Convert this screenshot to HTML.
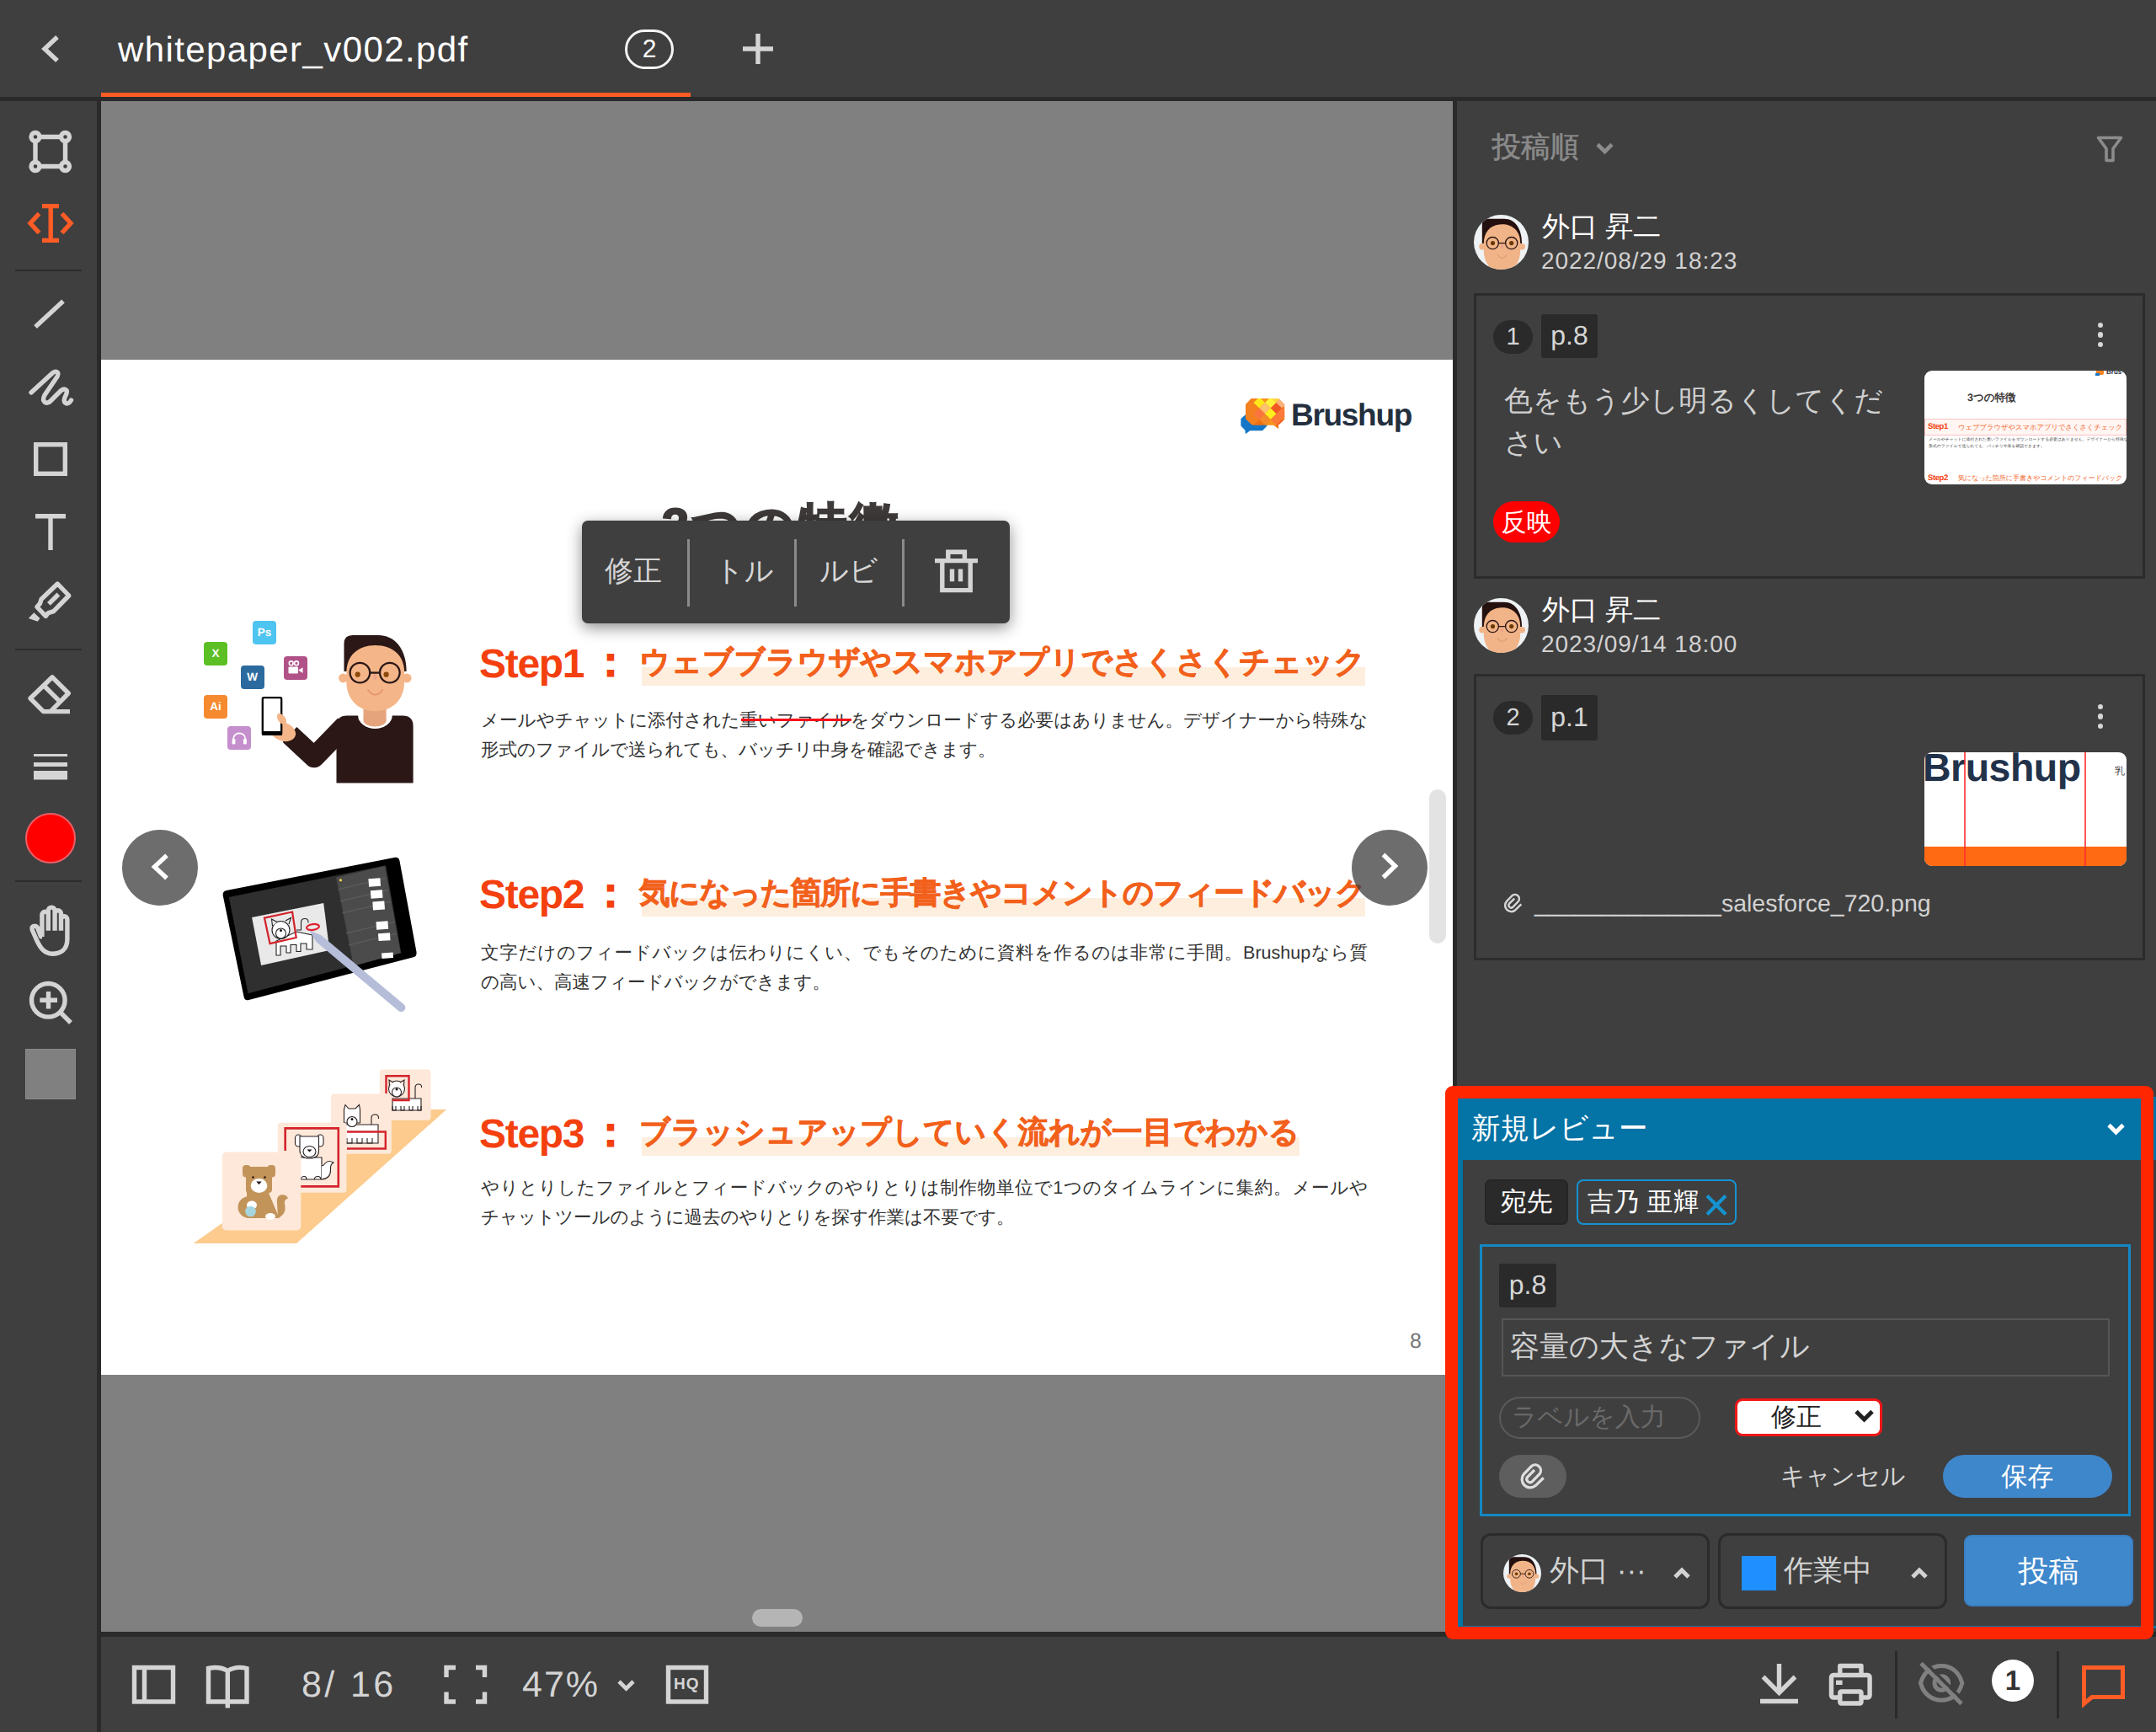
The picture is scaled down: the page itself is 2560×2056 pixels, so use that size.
<!DOCTYPE html>
<html lang="ja">
<head>
<meta charset="utf-8">
<title>whitepaper_v002.pdf</title>
<style>
*{margin:0;padding:0;box-sizing:border-box}
html,body{width:2560px;height:2056px;overflow:hidden;background:#3f3f3f;font-family:"Liberation Sans",sans-serif;color:#d6d6d6;text-rendering:geometricPrecision}
body{position:relative}
.a{position:absolute}
.nw{white-space:nowrap}
svg{position:absolute;overflow:visible}
/* ---------- frame ---------- */
#topbar{left:0;top:0;width:2560px;height:115px;background:#3f3f3f}
#topline{left:0;top:115px;width:2560px;height:5px;background:#2a2a2a}
#tabline{left:120px;top:110px;width:700px;height:5px;background:#ff5c26}
#toolbar{left:0;top:120px;width:115px;height:1936px;background:#3f3f3f}
#toolline{left:115px;top:115px;width:5px;height:1941px;background:#2a2a2a}
#viewer{left:120px;top:120px;width:1605px;height:1817px;background:#808080;overflow:hidden}
#panelline{left:1725px;top:120px;width:5px;height:1823px;background:#2a2a2a}
#panel{left:1730px;top:120px;width:830px;height:1823px;background:#3f3f3f}
#botline{left:120px;top:1937px;width:2440px;height:6px;background:#2a2a2a}
#bottombar{left:120px;top:1943px;width:2440px;height:113px;background:#3f3f3f}
#page{left:0;top:307px;width:1605px;height:1205px;background:#fff}

/* ---------- top bar ---------- */
#fname{left:140px;top:37.500px;font-size:42px;line-height:1;letter-spacing:1.4px;color:#fff}
#tabcount{left:742px;top:35px;width:58px;height:47px;border:3px solid #f4f4f4;border-radius:24px;color:#fff;font-size:30px;line-height:41px;text-align:center}
.ic{fill:none;stroke:#d4d4d4;stroke-width:5.4}
.icf{fill:#d4d4d4;stroke:none}
.or{stroke:#ff5c26}
.tdiv{left:18px;width:79px;height:2px;background:#2b2b2b}
#redc{left:30px;top:965px;width:60px;height:60px;border-radius:50%;background:#ff0000;border:2.500px solid #ea5f67}
#graysq{left:30px;top:1245px;width:60px;height:60px;background:#808080;border:1px solid #8b8b8b}

/* ---------- pdf page ---------- */
#vw{left:-120px;top:-120px;width:0;height:0}
#ptitle{left:786px;top:596px;font-size:58px;line-height:1;font-weight:bold;color:#3e3a39;-webkit-text-stroke:2px #3e3a39;letter-spacing:3.500px}
.stp{left:569px;font-size:48px;line-height:1;font-weight:bold;color:#f4400f;letter-spacing:-1.3px}
.stc{left:701px;font-size:48px;line-height:1;font-weight:bold;color:#f4400f;-webkit-text-stroke:1.600px #f4400f}
.hl{left:761.500px;height:22px;background:#fdeede}
.hd{left:759px;font-size:36.500px;line-height:1;font-weight:bold;color:#f2601b;-webkit-text-stroke:.75px #f2601b;text-align:justify;text-align-last:justify}
.bd{left:571px;width:1053px;font-size:21.500px;line-height:35px;color:#333}
.bd .j{display:block;text-align:justify;text-align-last:justify;white-space:nowrap}
#strike{left:880px;top:853.200px;width:131px;height:2.400px;background:#f8101a}
#pno{left:1674px;top:1580px;font-size:25px;line-height:1;color:#777}
.nav{width:90px;height:90px;border-radius:50%;background:rgba(58,58,58,.74);top:985px}
#vscroll{left:1697px;top:937px;width:20px;height:183px;border-radius:10px;background:#e3e3e3}
#hscroll{left:893px;top:1910px;width:60px;height:21px;border-radius:11px;background:#b5b5b5}
#popup{left:691px;top:618px;width:508px;height:122px;border-radius:7px;background:#3f3f3f;box-shadow:0 5px 18px rgba(0,0,0,.45)}
#popup .t{top:43px;font-size:34px;line-height:1;color:#d6d6d6}
#popup .d{top:22px;width:3px;height:80px;background:#8a8a8a}

/* ---------- right panel ---------- */
#pn{left:0;top:0;width:0;height:0}
#sortlbl{left:1771.500px;top:158px;font-size:34.500px;line-height:1;color:#8a8a8a;-webkit-text-stroke:.6px #8a8a8a}
.av{width:65px;height:65px;left:1750px}
.uname{left:1831px;font-size:33px;line-height:1;color:#fff}
.udate{left:1830px;font-size:28px;line-height:1;color:#d2d2d2;letter-spacing:.95px}
.card{left:1750px;width:797px;border:3px solid #2c2c2c}
.num{left:1773px;width:47px;height:40px;border-radius:20px;background:#2a2a2a;color:#d6d6d6;font-size:29px;line-height:40px;text-align:center}
.pg{left:1830px;width:67px;height:51px;border-radius:3px;background:#2a2a2a;color:#d6d6d6;font-size:32px;line-height:49px;text-align:center}
.dot{left:2490.800px;width:6.600px;height:6.600px;border-radius:50%;background:#d6d6d6}
#ctext{left:1786px;top:452px;font-size:34px;line-height:49.500px;color:#cfcfcf}
.thumb{left:2285px;width:240px;height:135px;border-radius:9px;background:#fff;overflow:hidden}
#lbl{left:1773px;top:595px;width:79px;height:49px;border-radius:25px;background:#ff0000;color:#fff;font-size:30px;line-height:52px;text-align:center}
#attach{left:1822px;top:1059px;font-size:28.500px;line-height:1;color:#d2d2d2}
/* new review */
#nrblue{left:1731px;top:1302px;width:829px;height:631px;background:#0473a5}
#nrbody{left:1737px;top:1377px;width:823px;height:553px;background:#3f3f3f}
#redbox{left:1716px;top:1289px;width:841px;height:657px;border:15px solid #ff2600;border-radius:9px}
#nrtitle{left:1747px;top:1323px;font-size:34.500px;line-height:1;color:#fff}
#toL{left:1763px;top:1400px;width:99px;height:54px;border-radius:7px;background:#2a2a2a;border:2px solid #252525;color:#fff;font-size:31px;line-height:50px;text-align:center}
#toN{left:1872px;top:1400px;width:190px;height:54px;border-radius:8px;border:2.500px solid #1593d1;color:#fff;font-size:31px;line-height:49px;padding-left:11px}
#ed{left:1757px;top:1477px;width:773px;height:323px;border:3px solid #1488c4}
#edpg{left:1780px;top:1500px;width:68px;height:52px;border-radius:3px;background:#2a2a2a;color:#d6d6d6;font-size:32px;line-height:50px;text-align:center}
#edin{left:1783px;top:1565px;width:722px;height:69px;border:2.500px solid #565656;color:#d2d2d2;font-size:35px;line-height:63px;padding-left:8px}
#edlab{left:1780px;top:1658px;width:239px;height:50px;border:2.500px solid #5a5a5a;border-radius:25px;color:#6a6a6a;font-size:30px;line-height:45px;padding-left:13px}
#edsel{left:2060px;top:1660px;width:175px;height:45px;border:3px solid #f01818;border-radius:9px;background:#fff;color:#222;font-size:30px;line-height:39px;padding-left:40px}
#edclip{left:1780px;top:1727px;width:80px;height:51px;border-radius:26px;background:#5e5e5e}
#edcan{left:2114px;top:1739px;font-size:29px;line-height:1;color:#d6d6d6}
#edsave{left:2307px;top:1727px;width:201px;height:51px;border-radius:26px;background:#3f87cb;color:#fff;font-size:31px;line-height:51px;text-align:center}
.sel{top:1820px;height:90px;width:272px;border:3px solid #2b2b2b;border-radius:12px}
.sel span{position:absolute;top:24px;font-size:35px;line-height:1;color:#d2d2d2;white-space:nowrap}
#post{left:2332px;top:1822px;width:201px;height:85px;border-radius:9px;background:#3f88cc;border:2px solid #3a7fc2;color:#fff;font-size:36px;line-height:81px;text-align:center}
#stsq{left:2068px;top:1847px;width:41px;height:41px;background:#1f8fff}

/* ---------- bottom bar ---------- */
#bb{left:0;top:0;width:0;height:0}
#pgno{left:358px;top:1979px;font-size:43px;line-height:1;color:#d4d4d4;letter-spacing:3.400px}
#zoomv{left:620px;top:1979px;font-size:43px;line-height:1;color:#d4d4d4;letter-spacing:2px}
.bdiv{top:1960px;width:3px;height:80px;background:#2a2a2a}
#cnt{left:2365px;top:1970px;width:50px;height:50px;border-radius:50%;background:#fff;color:#333;font-size:33px;font-weight:bold;line-height:50px;text-align:center}
#hq{left:800px;top:1990px;font-size:19px;font-weight:bold;line-height:1;color:#d4d4d4;letter-spacing:1px}

#logot{left:1533px;top:474px;font-size:37px;line-height:1;font-weight:bold;color:#232f3e;letter-spacing:-1.300px}
.ai{width:28px;height:28px;border-radius:4px;color:#fff;font-weight:bold;font-size:13.500px;line-height:28px;text-align:center}

#th1 div,#th2 div{position:absolute;white-space:nowrap}
</style>
</head>
<body>
<svg style="left:0;top:0" width="0" height="0">
  <defs>
    <symbol id="avatar" viewBox="0 0 65 65">
      <clipPath id="avc"><circle cx="32.500" cy="32.500" r="32.500"/></clipPath>
      <circle cx="32.500" cy="32.500" r="32.500" fill="#eef2f4"/>
      <g clip-path="url(#avc)">
        <path d="M9.800 34V12Q9.800 4.800 17 4.800H36C50 4.800 57 18 57 34Z" fill="#24110f"/>
        <circle cx="9.900" cy="37.800" r="3.700" fill="#f1b488"/><circle cx="57.300" cy="37.800" r="3.700" fill="#f1b488"/>
        <path d="M11.800 34C11.800 19 21 11.300 33.500 11.300C46 11.300 55.200 19 55.200 34V42C55.200 58 46 68 33.500 68C21 68 11.800 58 11.800 42Z" fill="#f1b488"/>
        <rect x="32.300" y="35.500" width="2.600" height="4.600" rx="1.300" fill="#eba088"/>
        <circle cx="22.500" cy="33.600" r="2.600" fill="#6b3a00"/><circle cx="44.700" cy="33.600" r="2.600" fill="#6b3a00"/>
        <circle cx="22.300" cy="33.600" r="7.100" fill="none" stroke="#2a1512" stroke-width="1.300"/><circle cx="44.700" cy="33.600" r="7.100" fill="none" stroke="#2a1512" stroke-width="1.300"/>
        <path d="M29.400 33.600H37.600" stroke="#2a1512" stroke-width="1.300"/>
        <path d="M28 47.100Q33.700 55.500 39.600 47.100" fill="none" stroke="#e09b7c" stroke-width="1.200"/>
      </g>
    </symbol>
    <symbol id="clip" viewBox="1803 1735 34 34">
      <path d="M1832.800 1754.200L1823.200 1763.600A9.800 9.800 0 0 1 1809.400 1749.800L1818.700 1740.300A6.700 6.700 0 0 1 1828.100 1749.700L1819.100 1759A4 4 0 0 1 1813.500 1753.500L1822 1745" fill="none" stroke-width="3.300"/>
    </symbol>
  </defs>
</svg>
<div id="topbar" class="a"></div>
<div id="topline" class="a"></div>
<div id="tabline" class="a"></div>
<div id="toolbar" class="a"></div>
<div id="toolline" class="a"></div>
<div id="viewer" class="a">
  <div id="page" class="a"></div>
  <div id="vw" class="a">
    <div id="ptitle" class="a nw">3つの特徴</div>
    <!-- step 1 -->
    <div class="a hl" style="top:792px;width:859.500px"></div>
    <div class="a stp nw" style="top:765px">Step1</div><div class="a stc nw" style="top:763px">：</div>
    <div class="a hd nw" style="top:768px;width:862px">ウェブブラウザやスマホアプリでさくさくチェック</div>
    <div class="a bd" style="top:838px"><span class="j">メールやチャットに添付された重いファイルをダウンロードする必要はありません。デザイナーから特殊な</span><span class="nw">形式のファイルで送られても、バッチリ中身を確認できます。</span></div>
    <div id="strike" class="a"></div>
    <!-- step 2 -->
    <div class="a hl" style="top:1066px;width:859.500px"></div>
    <div class="a stp nw" style="top:1039px">Step2</div><div class="a stc nw" style="top:1037px">：</div>
    <div class="a hd nw" style="top:1042px;width:862px;letter-spacing:-1.350px">気になった箇所に手書きやコメントのフィードバック</div>
    <div class="a bd" style="top:1114px"><span class="j">文字だけのフィードバックは伝わりにくい、でもそのために資料を作るのは非常に手間。Brushupなら質</span><span class="nw">の高い、高速フィードバックができます。</span></div>
    <!-- step 3 -->
    <div class="a hl" style="top:1350px;width:781px"></div>
    <div class="a stp nw" style="top:1323px">Step3</div><div class="a stc nw" style="top:1321px">：</div>
    <div class="a hd nw" style="top:1326px;width:784px">ブラッシュアップしていく流れが一目でわかる</div>
    <div class="a bd" style="top:1393px"><span class="j">やりとりしたファイルとフィードバックのやりとりは制作物単位で1つのタイムラインに集約。メールや</span><span class="nw">チャットツールのように過去のやりとりを探す作業は不要です。</span></div>
    <!-- illustrations -->
    <div id="logot" class="a nw">Brushup</div>
    <div class="a ai" style="left:300px;top:736.500px;background:#4ec4f0">Ps</div>
    <div class="a ai" style="left:242px;top:761.500px;background:#5cc024">X</div>
    <div class="a ai" style="left:285.500px;top:789.500px;background:#2b6a9e">W</div>
    <div class="a ai" style="left:337px;top:778.500px;background:#b05187"></div>
    <div class="a ai" style="left:242px;top:825px;background:#f68a2e">Ai</div>
    <div class="a ai" style="left:270.300px;top:862px;background:#c58fcd"></div>
    <svg style="left:0;top:0" width="1725" height="1700" viewBox="0 0 1725 1700">
      <!-- logo -->
      <path d="M1478.900 492.300L1473.400 497V505.600L1478.400 510.700L1478.900 515.300L1484.200 511.200H1499L1504.500 505.600V492Z" fill="#1476c6"/>
      <clipPath id="lgc"><path d="M1485.600 473H1518L1525.200 480V498L1518 504.500V509.300L1512 504.500H1486.700L1479 497.300V480Z"/></clipPath>
      <g clip-path="url(#lgc)">
        <rect x="1475" y="470" width="55" height="42" fill="#f4801f"/>
        <g transform="rotate(45 1502 488.500)">
          <rect x="1485" y="471.500" width="9.500" height="9.500" fill="#f7931e"/><rect x="1494.500" y="471.500" width="9.500" height="9.500" fill="#fff23a"/><rect x="1504" y="471.500" width="9.500" height="9.500" fill="#f15a24"/>
          <rect x="1485" y="481" width="9.500" height="9.500" fill="#ffe81a"/><rect x="1494.500" y="481" width="9.500" height="9.500" fill="#fcc26c"/><rect x="1504" y="481" width="9.500" height="9.500" fill="#ffef1e"/><rect x="1513.500" y="481" width="9.500" height="9.500" fill="#fb7837"/>
          <rect x="1494.500" y="490.500" width="9.500" height="9.500" fill="#fb7440"/><rect x="1504" y="490.500" width="9.500" height="9.500" fill="#f58a2a"/><rect x="1513.500" y="490.500" width="9.500" height="9.500" fill="#f7931e"/><rect x="1523" y="481" width="9.500" height="9.500" fill="#f26322"/>
          <rect x="1504" y="500" width="9.500" height="9.500" fill="#ee6f12"/><rect x="1513.500" y="500" width="9.500" height="9.500" fill="#e86a17"/><rect x="1494.500" y="462" width="9.500" height="9.500" fill="#ffd44a"/><rect x="1504" y="462" width="9.500" height="9.500" fill="#fbb27c"/><rect x="1513.500" y="471.500" width="9.500" height="9.500" fill="#fb7a3c"/>
        </g>
      </g>
      <!-- person -->
      <path d="M399.500 929.500V862Q399.500 849.400 412 849.400H478Q490.600 849.400 490.600 862V929.500Z" fill="#2a1716"/>
      <path d="M410 861L373 899L344 872" fill="none" stroke="#2a1716" stroke-width="24.500" stroke-linejoin="round"/>
      <ellipse cx="445.400" cy="849.400" rx="20.300" ry="15.500" fill="#fff"/>
      <rect x="431.500" y="836" width="27.100" height="19" fill="#e6a47c"/><ellipse cx="445.050" cy="855" rx="13.550" ry="7.500" fill="#e6a47c"/>
      <path d="M408.500 797V764Q408.500 754 418.500 754H449C470 754 482.600 772 482.600 797Z" fill="#2a1716"/>
      <circle cx="407.500" cy="805" r="5.400" fill="#f4b588"/><circle cx="483.200" cy="805" r="5.400" fill="#f4b588"/>
      <path d="M411.300 799C411.300 778 425 766 445.700 766C466.500 766 480.200 778 480.200 799V809C480.200 830 466.500 844.200 445.700 844.200C425 844.200 411.300 830 411.300 809Z" fill="#f4b588"/>
      <rect x="443.600" y="800" width="3.600" height="7" rx="1.800" fill="#eea58a"/>
      <circle cx="424.700" cy="800.700" r="3.100" fill="#8b4a0a"/><circle cx="458.600" cy="800.700" r="3.100" fill="#8b4a0a"/>
      <circle cx="427.400" cy="798.600" r="11.800" fill="none" stroke="#2a1716" stroke-width="2.300"/><circle cx="462.800" cy="798.600" r="11.800" fill="none" stroke="#2a1716" stroke-width="2.300"/>
      <path d="M439.200 798.600H451" stroke="#2a1716" stroke-width="2.300"/>
      <path d="M436.500 818.500Q445.500 831 454.600 818.500" fill="none" stroke="#e4926c" stroke-width="1.600"/>
      <ellipse cx="336" cy="868.500" rx="15.500" ry="11" transform="rotate(20 336 868.500)" fill="#f4b588"/>
      <rect x="311.800" y="828.200" width="22.400" height="43.600" rx="1.500" fill="#fff" stroke="#000" stroke-width="2.300"/><rect x="311" y="868" width="24" height="4.800" fill="#000"/>
      <ellipse cx="334.500" cy="853.500" rx="4.300" ry="7.500" transform="rotate(-35 334.500 853.500)" fill="#f4b588"/>
      <!-- app icon glyphs -->
      <g fill="#fff"><rect x="342.500" y="791.500" width="11.500" height="8" rx="1"/><path d="M354.500 795.500L359.500 792.300V799L354.500 795.800Z"/></g>
      <g fill="none" stroke="#fff" stroke-width="1.600"><circle cx="345.700" cy="787.300" r="2.400"/><circle cx="352" cy="787.300" r="2.400"/></g>
      <path d="M277 880.500V877.500a7.200 7.200 0 0 1 14.400 0V880.500" fill="none" stroke="#fff" stroke-width="1.700"/>
      <g fill="#fff"><rect x="275.600" y="877" width="3.800" height="6.400" rx="1.200"/><rect x="289" y="877" width="3.800" height="6.400" rx="1.200"/></g>
      <!-- tablet -->
      <path d="M264.700 1063Q264 1058 269 1057L468 1018Q473.500 1017 474.500 1022L494.500 1130Q495.500 1135.500 490 1136.500L295.500 1187Q290.500 1188.500 289.500 1183Z" fill="#000"/>
      <path d="M271.800 1065L458.200 1027.300L476.400 1131.200L294.500 1179.200Z" fill="#2f2f2f"/>
      <path d="M399.100 1041.600L456.900 1027.900L475.700 1131.200L419.900 1146.800Z" fill="#4b4b4b"/>
      <g fill="#5a5a5a"><path d="M401.500 1055L459 1041.500L459.300 1043L401.800 1056.500ZM404 1069L461.500 1055.500L461.800 1057L404.300 1070.500ZM406.500 1083L464 1069.500L464.300 1071L406.800 1084.500ZM411 1107L468.500 1093.500L468.800 1095L411.300 1108.500ZM414 1121L471 1107.500L471.300 1109L414.300 1122.500Z"/></g>
      <g fill="#fff" transform="rotate(-4 450 1080)"><rect x="440" y="1042.500" width="14" height="9.500"/><rect x="441.500" y="1056.500" width="14" height="9.500"/><rect x="443" y="1070" width="14" height="10"/><rect x="445.500" y="1094" width="14" height="9.500"/><rect x="447" y="1108" width="14" height="9"/><rect x="449.500" y="1131.500" width="13.500" height="6.500"/></g>
      <circle cx="404.500" cy="1044.800" r="1.600" fill="#f5d24a"/>
      <path d="M299.100 1089L384.200 1072.100L391.300 1127.900L310.100 1146.100Z" fill="#e9e9e9"/>
      <g fill="#fff" stroke="#222" stroke-width="1.100"><path d="M328 1117V1134H333V1123H340V1131H345V1121.500H352V1129.500H357V1120H364V1127H371V1110L352 1106Z"/><circle cx="333.500" cy="1104" r="10.500"/><circle cx="333.500" cy="1108" r="6"/><path d="M323.500 1099L322.500 1091L329 1094.500M343 1097L345.500 1089.500L339 1093" fill="#e9e9e9"/><path d="M352 1104H357.500V1095Q357.500 1090.500 362 1090.500Q366.500 1090.500 366 1095.500" fill="none"/></g>
      <circle cx="333.500" cy="1104.500" r="1.500" fill="#111"/>
      <path d="M314 1089.600L347.100 1082.500L351.700 1113L320.500 1120.100Z" fill="none" stroke="#d4232b" stroke-width="2.200"/>
      <ellipse cx="371.500" cy="1100.500" rx="7.500" ry="3.400" transform="rotate(-8 371.500 1100.500)" fill="none" stroke="#e02030" stroke-width="2.200"/>
      <path d="M367.500 1104.500L381.800 1110.400L479.550 1192.300A4.900 4.900 0 0 1 473.250 1199.900L375.500 1118Z" fill="#b5bdd9"/>
      <!-- stairs -->
      <path d="M229.600 1476H352.100L530.200 1317.100H451.500L264.500 1451.500Z" fill="#fccb8d"/>
      <rect x="450.800" y="1269.600" width="60.800" height="60.200" rx="4" fill="#fde8d9"/>
      <g fill="#fff" stroke="#2a2020" stroke-width="1.100"><path d="M466 1304H500V1318H466Z"/><path d="M466 1313V1318H470V1313M476 1313V1318H480V1313M486 1313V1318H490V1313M496 1313V1318H500V1313" fill="none"/><path d="M493 1304V1291Q493 1287 497 1287Q501 1287 500.500 1291" fill="none"/><circle cx="471" cy="1292.500" r="9.500"/><circle cx="471" cy="1296.500" r="5.500"/><path d="M462.500 1288.500L462 1282L467 1285M479.500 1288.500L480 1282L475 1285" fill="#fde8d9"/></g>
      <circle cx="471" cy="1293" r="1.500" fill="#111"/>
      <path d="M458.500 1298V1277.300H485.500V1306H466" fill="none" stroke="#d4232b" stroke-width="2.400"/>
      <rect x="392.900" y="1298.600" width="72" height="71.200" rx="4" fill="#fde8d9"/>
      <g fill="#fff" stroke="#2a2020" stroke-width="1.100"><path d="M409 1335H449V1357H409Z"/><path d="M412 1351V1357H418V1351M424 1351V1357H430V1351M436 1351V1357H442V1351" fill="none"/><path d="M441 1335V1327Q441 1323 445.500 1323Q450 1323 449.500 1328" fill="none"/><path d="M408.500 1333V1317L410 1311.500L414 1316H422L426.500 1311.500L427.500 1317V1333Z"/><circle cx="418" cy="1331.500" r="6"/></g>
      <circle cx="418" cy="1328.500" r="1.500" fill="#111"/>
      <path d="M412 1343.500H457.800V1363.500H412" fill="none" stroke="#d4232b" stroke-width="2.400"/>
      <rect x="329.800" y="1332.700" width="81.700" height="83.100" rx="4" fill="#fde8d9"/>
      <g fill="#fff" stroke="#2a2020" stroke-width="1.100"><path d="M356 1374H382V1400H356Z"/><path d="M382 1400Q393 1399 392.500 1388Q392 1382 396 1380Q390 1376.500 386 1381Q384 1384 382 1384" /><rect x="350.500" y="1347" width="7.500" height="14" rx="3.700"/><rect x="376.500" y="1347" width="7.500" height="14" rx="3.700"/><path d="M356 1349H378.500V1366Q378.500 1375 367.500 1375Q356 1375 356 1366Z"/><ellipse cx="367.500" cy="1367" rx="7.500" ry="6.500"/><path d="M357 1400Q358 1396 362 1396.500Q364 1397 364 1400M373 1400Q374 1396 378 1396.500Q381 1397 381 1400" fill="none"/></g>
      <path d="M364.500 1364.500H370.500L367.500 1367.500Z" fill="#111"/>
      <path d="M338.700 1366V1339.400H401.800V1408.400H357" fill="none" stroke="#d4232b" stroke-width="2.600"/>
      <rect x="263.800" y="1367.600" width="93.500" height="92.800" rx="4.500" fill="#fde8d9"/>
      <g fill="#c3945a"><rect x="288" y="1383" width="9.500" height="14.500" rx="4"/><rect x="317.500" y="1383" width="9.500" height="14.500" rx="4"/><path d="M292 1388Q292 1385 296 1385H319Q323 1385 323 1388V1412Q323 1416 319 1416L331 1444.500Q332 1446 330 1446H293V1416Q292 1414 292 1412Z"/><ellipse cx="296" cy="1433" rx="13.500" ry="13"/><path d="M330 1446Q341 1441 338 1429Q337 1424 342 1422.500Q340 1417.500 333 1418.500Q328 1420 329 1428Z"/></g>
      <ellipse cx="307.500" cy="1407.500" rx="9.800" ry="8.500" fill="#fff"/><ellipse cx="299" cy="1430.500" rx="6" ry="5" fill="#fff"/><ellipse cx="321" cy="1444" rx="6" ry="4" fill="#fff"/>
      <circle cx="297.500" cy="1438" r="6.300" fill="#a5d6df"/>
      <path d="M304.300 1402.500H310.700L307.500 1406.200Z" fill="#2a1716"/><circle cx="300.500" cy="1397.500" r="1.300" fill="#2a1716"/><circle cx="314.500" cy="1397.500" r="1.300" fill="#2a1716"/>
    </svg>
    <div id="pno" class="a">8</div>
    <!-- floating popup -->
    <div id="popup" class="a">
      <div class="a t nw" style="left:27px">修正</div>
      <div class="a d" style="left:125px"></div>
      <div class="a t nw" style="left:158px">トル</div>
      <div class="a d" style="left:252px"></div>
      <div class="a t nw" style="left:282px">ルビ</div>
      <div class="a d" style="left:380px"></div>
      <svg style="left:0;top:0" width="508" height="122" viewBox="691 618 508 122"><path class="ic" stroke-width="5.200" d="M1110 665.600H1161M1125.800 665V655.200H1145.400V665M1118.800 668V700.600H1152.200V668"/><path class="ic" stroke-width="4.600" d="M1130.500 675.500V690.200M1140.500 675.500V690.200"/></svg>
    </div>
    <!-- page nav -->
    <div class="a nav" style="left:145px"></div>
    <div class="a nav" style="left:1605px"></div>
    <svg style="left:0;top:0" width="1725" height="1200" viewBox="0 0 1725 1200"><polyline points="198,1015.500 183.500,1029 198,1042.500" fill="none" stroke="#fff" stroke-width="5.400"/><polyline points="1642.500,1014.500 1656.500,1028 1642.500,1041.500" fill="none" stroke="#fff" stroke-width="5.400"/></svg>
    <div id="vscroll" class="a"></div>
    <div id="hscroll" class="a"></div>
  </div>
</div>
<div id="panelline" class="a"></div>
<div id="panel" class="a"></div>
<div id="botline" class="a"></div>
<div id="bottombar" class="a"></div>
<div id="bb" class="a">
  <svg style="left:0;top:0" width="2560" height="2056" viewBox="0 0 2560 2056">
    <g class="ic" stroke-width="5">
      <!-- sidebar -->
      <rect x="159.500" y="1979.500" width="46" height="40.500"/><path d="M171.500 1979.500V2020"/>
      <!-- book -->
      <path d="M247.500 1980.500C256 1978.500 264 1979.500 270.300 1983.500C276.500 1979.500 285 1978.500 293 1980.500V2020H247.500ZM270.300 1983.500V2027.500"/>
      <!-- fullscreen -->
      <path d="M541 1979.500H530V1991M565 1979.500H575.500V1991M541 2020H530V2008.500M565 2020H575.500V2008.500"/>
      <!-- zoom chevron -->
      <polyline points="735,1996 743.500,2004.500 752,1996" stroke-width="4.600"/>
      <!-- HQ -->
      <rect x="793.500" y="1979.500" width="45" height="40.500"/>
      <!-- download -->
      <path d="M2112.500 1975V2008M2093.500 1990.500L2112.500 2009.500L2131.500 1990.500M2090 2019.500H2135"/>
      <!-- printer -->
      <path d="M2184.800 1988V1977.500H2210V1988" stroke-linejoin="round"/>
      <rect x="2174.500" y="1988.500" width="45.600" height="26.500" rx="2.500"/>
      <rect x="2184.800" y="2008" width="25.200" height="14" rx="1.500" fill="#3f3f3f"/>
    </g>
    <rect class="icf" x="2180" y="1994.600" width="7.600" height="5.400"/>
    <!-- eye off -->
    <g fill="none" stroke="#808080" stroke-width="5">
      <path d="M2280.500 1998C2284 1985 2294 1977.500 2305.300 1977.500C2317 1977.500 2326.500 1985 2329.800 1998C2326.500 2011 2317 2018.300 2305.300 2018.300C2294 2018.300 2284 2011 2280.500 1998Z"/>
      <circle cx="2305.300" cy="1998" r="8.300"/>
      <path d="M2284.300 1971.500L2332.300 2019.500" stroke="#3f3f3f" stroke-width="3.600"/>
      <path d="M2281 1974.500L2329 2022.500"/>
    </g>
    <!-- chat -->
    <path d="M2474.500 2022.500V1979.500H2520.500V2014.500H2484Z" fill="none" stroke="#ff5c26" stroke-width="5" stroke-linejoin="miter"/>
  </svg>
  <div id="pgno" class="a nw">8/ 16</div>
  <div id="zoomv" class="a nw">47%</div>
  <div id="hq" class="a nw">HQ</div>
  <div class="a bdiv" style="left:2250px"></div>
  <div class="a bdiv" style="left:2442px"></div>
  <div id="cnt" class="a">1</div>
</div>
<div id="pn" class="a">
  <div id="sortlbl" class="a nw">投稿順</div>
  <svg style="left:0;top:0" width="2560" height="2056" viewBox="0 0 2560 2056">
    <polyline points="1897,171.500 1905.500,180 1914,171.500" fill="none" stroke="#8c8c8c" stroke-width="4.600"/>
    <path d="M2491.500 163.500H2518.500L2509 176.500V190.500H2501V176.500Z" fill="none" stroke="#8c8c8c" stroke-width="3.600" stroke-linejoin="round"/>
  </svg>
  <!-- thread 1 -->
  <svg class="a" style="left:1750px;top:255px" width="65" height="65"><use href="#avatar"/></svg>
  <div class="a uname nw" style="top:252px">外口 昇二</div>
  <div class="a udate nw" style="top:295.500px">2022/08/29 18:23</div>
  <div class="a card" style="top:348px;height:339px"></div>
  <div class="a num" style="top:380px">1</div>
  <div class="a pg" style="top:372.500px;height:52px;line-height:51px">p.8</div>
  <div class="a dot" style="top:382.500px"></div><div class="a dot" style="top:394px"></div><div class="a dot" style="top:405.500px"></div>
  <div id="ctext" class="a nw">色をもう少し明るくしてくだ<br>さい</div>
  <div class="a thumb" style="top:440px" id="th1">
    <div style="left:204px;top:-1px;width:9px;height:6px;background:#f58220;border-radius:2px"></div><div style="left:203px;top:3px;width:5px;height:3px;background:#1476c6"></div><div style="left:216px;top:-2px;font-size:8px;line-height:8px;font-weight:bold;color:#232f3e">Brus</div>
    <div style="left:51px;top:26px;font-size:12.500px;line-height:13px;font-weight:bold;color:#3e3a39">3つの特徴</div>
    <div style="left:0;top:57px;width:240px;height:20px;background:#fff5f2;border:1.500px solid #ffc2c2"></div>
    <div style="left:4px;top:61.500px;font-size:9.500px;line-height:10px;font-weight:bold;color:#f4400f;letter-spacing:-.4px">Step1</div>
    <div style="left:40px;top:62px;font-size:8.300px;line-height:10px;color:#f2601b">ウェブブラウザやスマホアプリでさくさくチェック</div>
    <div style="left:5px;top:79px;font-size:4.850px;line-height:8px;color:#444">メールやチャットに添付された重いファイルをダウンロードする必要はありません。デザイナーから特殊な<br>形式のファイルで送られても、バッチリ中身を確認できます。</div>
    <div style="left:4px;top:122.500px;font-size:9.500px;line-height:10px;font-weight:bold;color:#f4400f;letter-spacing:-.4px">Step2</div>
    <div style="left:40px;top:123px;font-size:8px;line-height:10px;color:#f2601b">気になった箇所に手書きやコメントのフィードバック</div>
  </div>
  <div id="lbl" class="a">反映</div>
  <!-- thread 2 -->
  <svg class="a" style="left:1750px;top:710px" width="65" height="65"><use href="#avatar"/></svg>
  <div class="a uname nw" style="top:707px">外口 昇二</div>
  <div class="a udate nw" style="top:751px">2023/09/14 18:00</div>
  <div class="a card" style="top:800px;height:340px"></div>
  <div class="a num" style="top:832px">2</div>
  <div class="a pg" style="top:825px;height:54px;line-height:52px">p.1</div>
  <div class="a dot" style="top:835.500px"></div><div class="a dot" style="top:847px"></div><div class="a dot" style="top:858.500px"></div>
  <div class="a thumb" style="top:893px" id="th2">
    <div style="left:-2px;top:-5px;font-size:46.500px;line-height:1;font-weight:bold;color:#22324a;letter-spacing:-.5px">Brushup</div>
    <div style="left:226px;top:16px;font-size:12px;line-height:12px;color:#444">乳</div>
    <div style="left:0;top:112px;width:240px;height:23px;background:#ff6a13"></div>
    <div style="left:47px;top:0;width:2px;height:135px;background:rgba(255,45,45,.8)"></div>
    <div style="left:190px;top:0;width:2px;height:135px;background:rgba(255,45,45,.8)"></div>
  </div>
  <div id="attach" class="a nw">______________salesforce_720.png</div>
  <!-- new review -->
  <div id="nrblue" class="a"></div>
  <div id="nrbody" class="a"></div>
  <div id="nrtitle" class="a nw">新規レビュー</div>
  <div id="toL" class="a">宛先</div>
  <div id="toN" class="a nw">吉乃 亜輝</div>
  <div id="ed" class="a"></div>
  <div id="edpg" class="a">p.8</div>
  <div id="edin" class="a nw">容量の大きなファイル</div>
  <div id="edlab" class="a nw">ラベルを入力</div>
  <div id="edsel" class="a nw">修正</div>
  <div id="edclip" class="a"></div>
  <div id="edcan" class="a nw">キャンセル</div>
  <div id="edsave" class="a">保存</div>
  <div class="a sel" style="left:1758px"><span style="left:79px">外口 ···</span></div>
  <div class="a sel" style="left:2040px"><span style="left:75px">作業中</span></div>
  <div id="stsq" class="a"></div>
  <div id="post" class="a">投稿</div>
  <svg style="left:0;top:0" width="2560" height="2056" viewBox="0 0 2560 2056">
    <polyline points="2504,1335.500 2512.500,1344 2521,1335.500" fill="none" stroke="#fff" stroke-width="5"/>
    <path d="M2027 1419.500L2049 1441.500M2049 1419.500L2027 1441.500" stroke="#1593d1" stroke-width="4.200" fill="none"/>
    <polyline points="2204,1675.500 2213.500,1685 2223,1675.500" fill="none" stroke="#222" stroke-width="5"/>
    <polyline points="1989,1872 1997,1864 2005,1872" fill="none" stroke="#d2d2d2" stroke-width="5"/>
    <polyline points="2271,1872 2279,1864 2287,1872" fill="none" stroke="#d2d2d2" stroke-width="5"/>
  </svg>
  <svg class="a" style="left:1785px;top:1845px" width="45" height="45"><use href="#avatar"/></svg>
  <svg class="a" style="left:1784.200px;top:1059.300px" width="25.500" height="25.500" stroke="#d6d6d6"><use href="#clip"/></svg>
  <svg class="a" style="left:1803px;top:1735px" width="34" height="34" stroke="#dedede"><use href="#clip"/></svg>
  <div id="redbox" class="a"></div>
</div>

<!-- top bar content -->
<svg class="a" style="left:0;top:0" width="1000" height="115" viewBox="0 0 1000 115">
  <polyline class="ic" points="68,44 53,58 68,72" stroke-width="6"/>
  <path class="ic" d="M882 58H918M900 40V76" stroke-width="5.5"/>
</svg>
<div id="fname" class="a nw">whitepaper_v002.pdf</div>
<div id="tabcount" class="a">2</div>
<!-- left toolbar icons -->
<svg class="a" style="left:0;top:0" width="120" height="1400" viewBox="0 0 120 1400">
  <!-- transform -->
  <g class="ic" stroke-width="4.6">
    <path d="M47.5 162.5H72M47.5 197.5H72M42 168V192M77.5 168V192"/>
    <circle cx="42" cy="162.5" r="5"/><circle cx="77.5" cy="162.5" r="5"/><circle cx="42" cy="197.5" r="5"/><circle cx="77.5" cy="197.5" r="5"/>
  </g>
  <!-- text select (active) -->
  <g class="ic or" stroke-width="5.4">
    <path d="M50 244.6H70M50 285.4H70M60.2 244V286"/>
    <polyline points="46.5,253.5 36,265 46.5,276.5"/>
    <polyline points="73.5,253.5 84,265 73.5,276.5"/>
  </g>
  <!-- line -->
  <path class="ic" d="M42 388L75 357.5"/>
  <!-- freehand -->
  <path class="ic" stroke-linecap="round" stroke-linejoin="round" d="M37 466L61 444C66 439 71 441 68 447L53 469C49 477 55 481 60 476L71 465C76 460 80.500 462 79 467L76.500 473C75 480 81 481 84.500 475"/>
  <!-- rectangle -->
  <rect class="ic" x="42.700" y="527.700" width="34.600" height="34.600"/>
  <!-- text T -->
  <path class="ic" d="M42 612.700H78M60 612V653"/>
  <!-- highlighter -->
  <path class="ic" stroke-linejoin="round" d="M68.300 693L81.800 707L63.600 725.600L57 727.800L54.300 731.400L43.900 720.500L47.500 716.400L49.100 711.200Z"/>
  <path class="ic" stroke-width="5" d="M57.900 716.900L69.400 705.500"/>
  <path class="icf" d="M40.300 727.300L47.500 734L44.700 737.800L33.800 734Z"/>
  <!-- eraser -->
  <path class="ic" stroke-linejoin="round" d="M83 844.600H51.500L36 829L62.100 803.800L81.300 823L60 844.600M53.200 815L69.400 831.200"/>
  <!-- line weight -->
  <rect class="icf" x="40" y="895" width="40" height="3"/>
  <rect class="icf" x="40" y="905" width="40" height="5"/>
  <rect class="icf" x="40" y="915" width="40" height="10.500"/>
  <!-- hand -->
  <path class="ic" stroke-width="5.200" stroke-linejoin="round" d="M49.900 1112V1086a3.700 3.700 0 0 1 7.400 0V1104.700M57.300 1086V1081a3.900 3.900 0 0 1 7.800 0V1104.700M65.100 1086V1084.500a3.700 3.700 0 0 1 7.400 0V1104.700M72.500 1093V1091.500a3.700 3.700 0 0 1 7.400 0V1115C79.900 1127 72 1132.200 62 1132.200C52 1132.200 47.500 1124 44 1117L38.300 1104C36.800 1099.500 42 1097.500 44.500 1101L48.600 1111.800H50"/>
  <!-- zoom -->
  <circle class="ic" cx="57.300" cy="1187.300" r="19.800"/>
  <path class="ic" stroke-width="5.200" d="M47.300 1187.300H68M57.500 1177V1197.600"/>
  <path class="ic" d="M72.500 1202.500L84 1214"/>
</svg>
<div class="a tdiv" style="top:320px"></div>
<div class="a tdiv" style="top:770px"></div>
<div class="a tdiv" style="top:1045px"></div>
<div id="redc" class="a"></div>
<div id="graysq" class="a"></div>
</body>
</html>
